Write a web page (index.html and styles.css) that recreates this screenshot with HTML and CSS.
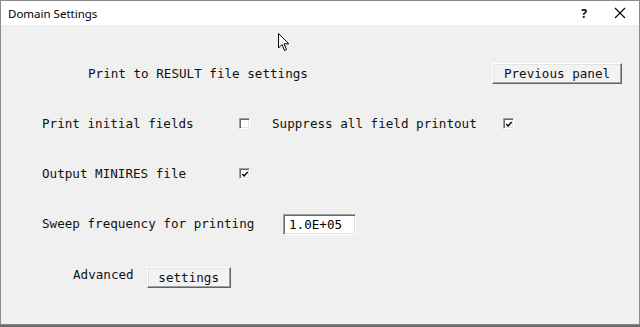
FILE: index.html
```html
<!DOCTYPE html>
<html lang="en">
<head>
<meta charset="UTF-8">
<title>Domain Settings</title>
<link rel="stylesheet" href="styles.css">
</head>
<body>

<div class="window">
	<div class="titlebar">
		<span class="title">Domain Settings</span>
		<span class="help">?</span>
		<svg class="close" width="12" height="12" viewBox="0 0 12 12"><path d="M1 1 L11 11 M11 1 L1 11" stroke="#000" stroke-width="1.1" fill="none"/></svg>
	</div>

	<div class="panel">
		<div class="row row_head">
			<span class="heading">Print to RESULT file settings</span>
			<button class="btn btn_prev">Previous panel</button>
		</div>

		<div class="row">
			<span class="label">Print initial fields</span>
			<span class="chk"></span>
			<span class="label label_sup">Suppress all field printout</span>
			<span class="chk on"><svg width="9" height="9" viewBox="0 0 9 9"><path d="M1.5 4 L3.5 6.2 L7.5 1.8" stroke="#000" stroke-width="1.6" fill="none"/></svg></span>
		</div>

		<div class="row">
			<span class="label">Output MINIRES file</span>
			<span class="chk on"><svg width="9" height="9" viewBox="0 0 9 9"><path d="M1.5 4 L3.5 6.2 L7.5 1.8" stroke="#000" stroke-width="1.6" fill="none"/></svg></span>
		</div>

		<div class="row">
			<span class="label label_sweep">Sweep frequency for printing</span>
			<span class="field">1.0E+05</span>
		</div>

		<div class="row row_adv">
			<span class="adv">Advanced</span>
			<button class="btn btn_set">settings</button>
		</div>
	</div>

	<!-- mouse pointer left on the dialog -->
	<svg class="cursor" width="12" height="19" viewBox="0 0 12 19"><path d="M0.5 0.5 L0.5 15 L4 11.5 L6.5 17.5 L8.5 16.6 L6 10.8 L10.8 10.8 Z" fill="#fff" stroke="#000" stroke-width="1"/></svg>
</div>
<div class="taskbar"></div>

</body>
</html>
```

FILE: styles.css
```css
*,
*::before,
*::after {
	margin: 0;
	padding: 0;
	box-sizing: border-box;
}
HTML, BODY {
	width: 100%;
	height: 100%;
	overflow: hidden;
	background-color: #5a5a5a;
}

.window {
	position: relative;
	width: 640px;
	height: 325px;
	border: 1px solid #8a8a8a;
	background-color: #f0f0f0;
	font-family: "DejaVu Sans Mono", "Liberation Mono", monospace;
	font-size: 12.6px;
	color: #111;
}
.taskbar {
	height: 2px;
	background-color: #6a6a6a;
}

.titlebar {
	display: flex;
	align-items: center;
	height: 24px;
	background-color: #fff;
	padding: 0 0 0 7px;
	font-family: "Noto Sans", "Liberation Sans", sans-serif;
	font-size: 11.5px;
	color: #000;
}
.title { flex: 1; }
.help { font-size: 12px; font-weight: bold; margin-right: 27px; }
.close { margin-right: 13px; }

.panel {
	display: flex;
	flex-direction: column;
	padding: 23px 0 0 41px;
}
.row {
	display: flex;
	align-items: center;
	height: 50px;
}
.row_head { padding-left: 46px; padding-right: 17px; }
.heading { flex: 1; }

.label { width: 197px; white-space: nowrap; }
.label_sup { width: auto; margin: 0 26px 0 22px; }
.label_sweep { width: 241px; }

.chk {
	display: flex;
	align-items: center;
	justify-content: center;
	width: 11px;
	height: 11px;
	background-color: #fff;
	border-top: 1px solid #a0a0a0;
	border-left: 1px solid #a0a0a0;
	border-bottom: 1px solid #fff;
	border-right: 1px solid #fff;
	box-shadow: inset 1px 1px 0 #696969, inset -1px -1px 0 #e3e3e3;
	margin-top: 1px;
}
.chk svg { margin: 1px 0 0 1px; }

.field {
	display: flex;
	align-items: center;
	width: 73px;
	height: 21px;
	padding-left: 5px;
	background-color: #fff;
	border-top: 1px solid #a0a0a0;
	border-left: 1px solid #a0a0a0;
	border-bottom: 1px solid #fff;
	border-right: 1px solid #fff;
	box-shadow: inset 1px 1px 0 #696969, inset -1px -1px 0 #e3e3e3;
	color: #000;
	margin-top: 2px;
}

.btn {
	font-family: inherit;
	font-size: inherit;
	color: #111;
	height: 21px;
	background-color: #f3f3f3;
	border-top: 1px solid #fff;
	border-left: 1px solid #fff;
	border-bottom: 1px solid #646464;
	border-right: 1px solid #646464;
	box-shadow: inset -1px -1px 0 #a0a0a0, inset 1px 1px 0 #e3e3e3;
	text-align: center;
}
.btn_prev { width: 130px; }
.row_adv { padding-left: 31px; }
.adv { margin-top: 3px; }
.btn_set { width: 84px; margin-left: 13px; margin-top: 9px; }

.cursor {
	position: absolute;
	left: 277px;
	top: 32px;
}
```
